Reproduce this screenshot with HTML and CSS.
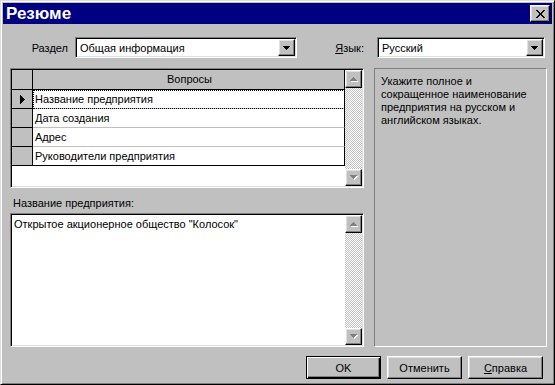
FILE: index.html
```html
<!DOCTYPE html>
<html lang="ru">
<head>
    <meta charset="UTF-8" />
    <title>Резюме</title>
    <link rel="stylesheet" href="styles.css">
</head>
<body>
    <div class="window">
        <div class="titlebar">
            <span class="title">Резюме</span>
            <button class="btn close-btn">
                <svg width="9" height="8" viewBox="0 0 9 8"><path d="M0 0h2v1H0zM7 0h2v1H7zM1 1h2v1H1zM6 1h2v1H6zM2 2h2v1H2zM5 2h2v1H5zM3 3h3v2H3zM2 5h2v1H2zM5 5h2v1H5zM1 6h2v1H1zM6 6h2v1H6zM0 7h2v1H0zM7 7h2v1H7z" fill="#000"/></svg>
            </button>
        </div>

        <div class="content">
            <div class="top-row">
                <span class="lbl-section">Раздел</span>
                <div class="combo combo-section">
                    <span class="combo-text">Общая информация</span>
                    <span class="btn drop-btn">
                        <svg width="7" height="4" viewBox="0 0 7 4"><path d="M0 0h7v1H6v1H5v1H4v1H3V3H2V2H1V1H0z" fill="#000"/></svg>
                    </span>
                </div>
                <span class="lbl-lang"><u>Я</u>зык:</span>
                <div class="combo combo-lang">
                    <span class="combo-text">Русский</span>
                    <span class="btn drop-btn">
                        <svg width="7" height="4" viewBox="0 0 7 4"><path d="M0 0h7v1H6v1H5v1H4v1H3V3H2V2H1V1H0z" fill="#000"/></svg>
                    </span>
                </div>
            </div>

            <div class="main">
                <div class="left">
                    <div class="field grid">
                        <div class="grid-body">
                            <div class="grid-row grid-head">
                                <div class="ind"></div>
                                <div class="cell head-cell">Вопросы</div>
                            </div>
                            <div class="grid-row">
                                <div class="ind">
                                    <svg width="5" height="9" viewBox="0 0 5 9"><path d="M0 0h1v1h1v1h1v1h1v1h1v1H4v1H3v1H2v1H1v1H0z" fill="#000"/></svg>
                                </div>
                                <div class="cell focused">Название предприятия</div>
                            </div>
                            <div class="grid-row">
                                <div class="ind"></div>
                                <div class="cell">Дата создания</div>
                            </div>
                            <div class="grid-row">
                                <div class="ind"></div>
                                <div class="cell">Адрес</div>
                            </div>
                            <div class="grid-row last">
                                <div class="ind"></div>
                                <div class="cell">Руководители предприятия</div>
                            </div>
                        </div>
                        <div class="vscroll">
                            <span class="btn scroll-btn up">
                                <svg width="8" height="5" viewBox="0 0 8 5"><path d="M4 1h1v1h1v1h1v1h1v1H1V4h1V3h1V2h1z" fill="#fff"/><path d="M3 0h1v1h1v1h1v1h1v1H0V3h1V2h1V1h1z" fill="#808080"/></svg>
                            </span>
                            <span class="track"></span>
                            <span class="btn scroll-btn down">
                                <svg width="8" height="5" viewBox="0 0 8 5"><path d="M1 1h7v1H7v1H6v1H5v1H4V4H3V3H2V2H1z" fill="#fff"/><path d="M0 0h7v1H6v1H5v1H4v1H3V3H2V2H1V1H0z" fill="#808080"/></svg>
                            </span>
                        </div>
                    </div>

                    <div class="caption">Название предприятия:</div>

                    <div class="field memo">
                        <div class="memo-text">Открытое акционерное общество "Колосок"</div>
                        <div class="vscroll">
                            <span class="btn scroll-btn up">
                                <svg width="8" height="5" viewBox="0 0 8 5"><path d="M4 1h1v1h1v1h1v1h1v1H1V4h1V3h1V2h1z" fill="#fff"/><path d="M3 0h1v1h1v1h1v1h1v1H0V3h1V2h1V1h1z" fill="#808080"/></svg>
                            </span>
                            <span class="track"></span>
                            <span class="btn scroll-btn down">
                                <svg width="8" height="5" viewBox="0 0 8 5"><path d="M1 1h7v1H7v1H6v1H5v1H4V4H3V3H2V2H1z" fill="#fff"/><path d="M0 0h7v1H6v1H5v1H4v1H3V3H2V2H1V1H0z" fill="#808080"/></svg>
                            </span>
                        </div>
                    </div>
                </div>

                <div class="hint">
                    Укажите полное и<br>
                    сокращенное наименование<br>
                    предприятия на русском и<br>
                    английском языках.
                </div>
            </div>

            <div class="buttons">
                <button class="btn push default">OK</button>
                <button class="btn push">Отменить</button>
                <button class="btn push"><u>С</u>правка</button>
            </div>
        </div>
    </div>
</body>
</html>
```

FILE: styles.css
```css
* {
    margin: 0;
    padding: 0;
    box-sizing: border-box;
}

body {
    font-family: 'Liberation Sans', Arial, sans-serif;
    font-size: 11px;
    color: #000;
    background: #c0c0c0;
}

.window {
    width: 555px;
    height: 385px;
    display: flex;
    flex-direction: column;
    padding: 2px;
    background: #c0c0c0;
    border: 1px solid;
    border-color: #dfdfdf #000 #000 #dfdfdf;
    box-shadow: inset 1px 1px #fff, inset -1px -1px #808080;
}

/* 3d raised look, used by every button */
.btn {
    background: #c0c0c0;
    border: 1px solid;
    border-color: #fff #000 #000 #fff;
    box-shadow: inset -1px -1px #808080, inset 1px 1px #dfdfdf;
    display: flex;
    align-items: center;
    justify-content: center;
    font-family: inherit;
    font-size: 11px;
    color: #000;
}

/* sunken field */
.field, .combo {
    background: #fff;
    border: 1px solid;
    border-color: #808080 #fff #fff #808080;
    box-shadow: inset 1px 1px #000, inset -1px -1px #dfdfdf;
    padding: 1px;
}

.titlebar {
    height: 21px;
    background: #000080;
    color: #fff;
    display: flex;
    align-items: center;
    justify-content: space-between;
    padding: 0 2px 0 3px;
}

.title {
    font-size: 17px;
    font-weight: bold;
}

.close-btn {
    width: 20px;
    height: 17px;
}

.content {
    flex: 1;
    display: flex;
    flex-direction: column;
    padding: 13px 5px 3px 7px;
}

.top-row {
    display: flex;
    align-items: center;
    height: 21px;
}

.lbl-section {
    width: 58px;
    text-align: right;
    margin-right: 7px;
}

.combo {
    height: 21px;
    display: flex;
    align-items: center;
}

.combo-section {
    width: 222px;
}

.combo-lang {
    width: 168px;
    margin-right: 2px;
}

.combo-text {
    flex: 1;
    padding-left: 3px;
}

.drop-btn {
    width: 17px;
    height: 17px;
}

.lbl-lang {
    flex: 1;
    text-align: right;
    padding-right: 13px;
}

.main {
    display: flex;
    gap: 10px;
    height: 279px;
    margin-top: 10px;
}

.left {
    width: 354px;
    display: flex;
    flex-direction: column;
}

.grid {
    height: 120px;
    display: flex;
}

.grid-body {
    flex: 1;
}

.grid-row {
    display: grid;
    grid-template-columns: 21px 1fr;
    height: 19px;
}

.grid-head {
    height: 20px;
}

.ind {
    background: #c0c0c0;
    border-right: 1px solid #000;
    border-bottom: 1px solid #000;
    display: flex;
    align-items: center;
    justify-content: center;
}

.cell {
    border-right: 1px solid #000;
    border-bottom: 1px solid #c0c0c0;
    padding-left: 2px;
    line-height: 18px;
    white-space: nowrap;
}

.grid-row.last .cell {
    border-bottom-color: #000;
}

.head-cell {
    background: #c0c0c0;
    border-bottom-color: #000;
    text-align: center;
    line-height: 19px;
}

.focused {
    outline: 1px dotted #000;
    outline-offset: -1px;
}

.vscroll {
    width: 17px;
    display: flex;
    flex-direction: column;
}

.scroll-btn {
    height: 17px;
}

.scroll-btn.up {
    height: 18px;
}

.track {
    flex: 1;
    background: repeating-conic-gradient(#c0c0c0 0 25%, #fff 0 50%) 0 0 / 2px 2px;
}

.caption {
    height: 25px;
    padding: 9px 0 0 3px;
    line-height: 13px;
}

.memo {
    flex: 1;
    display: flex;
}

.memo-text {
    flex: 1;
    padding: 3px 2px;
    line-height: 13px;
    white-space: nowrap;
}

.hint {
    flex: 1;
    border: 1px solid;
    border-color: #808080 #fff #fff #808080;
    padding: 6px;
    line-height: 13px;
    white-space: nowrap;
}

.buttons {
    display: flex;
    justify-content: flex-end;
    gap: 6px;
    margin-top: 9px;
    padding-right: 4px;
}

.push {
    width: 75px;
    height: 23px;
}

.push.default {
    border-color: #000;
    box-shadow: inset 1px 1px #fff, inset -1px -1px #000, inset -2px -2px #808080;
}
```
